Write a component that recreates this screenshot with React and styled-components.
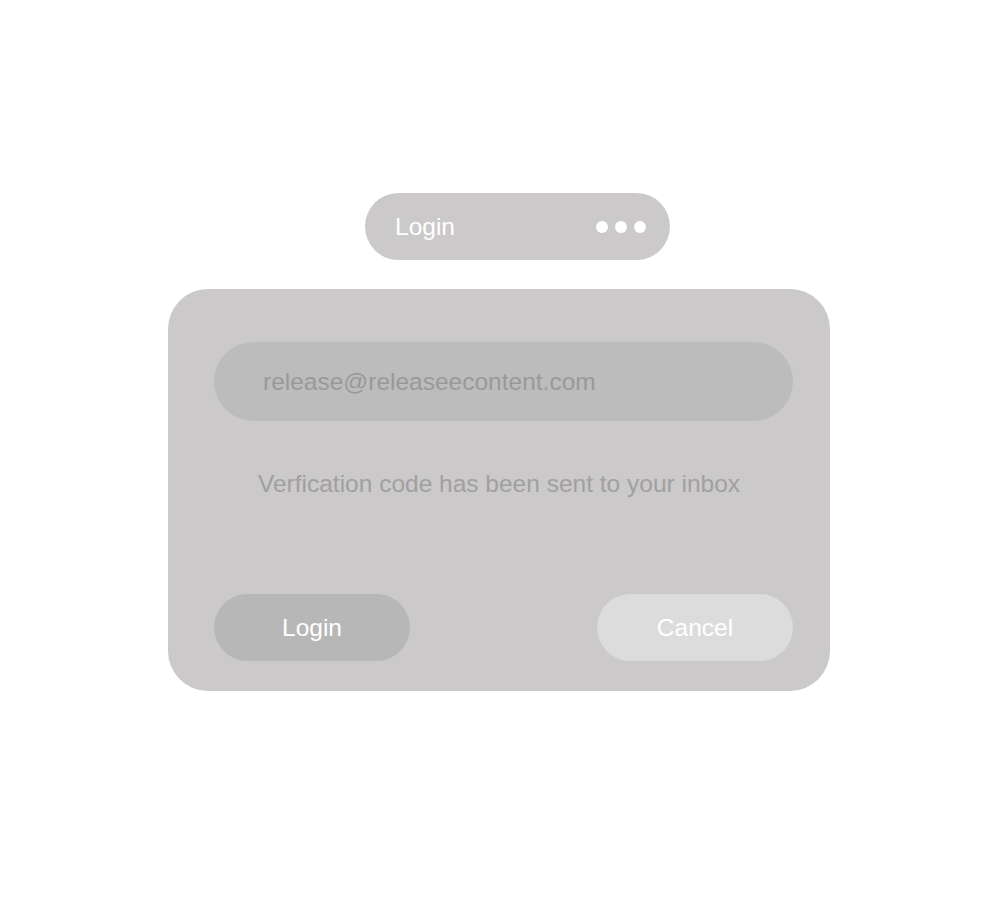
import styled, { createGlobalStyle } from "styled-components";

const GlobalStyle = createGlobalStyle`
  body {
    margin: 0;
    background: #ffffff;
    font-family: "Liberation Sans", Arial, sans-serif;
  }
`;

function App() {
  return (
    <>
      <GlobalStyle />
      <Page>
        <TitleBar>
          <TitleText>Login</TitleText>
          <Dots>
            <Dot />
            <Dot />
            <Dot />
          </Dots>
        </TitleBar>
        <Card>
          <FieldRow>
            <EmailField>release@releaseecontent.com</EmailField>
          </FieldRow>
          <Message>Verfication code has been sent to your inbox</Message>
          <Actions>
            <ActionButton $bg="#b7b7b7">Login</ActionButton>
            <ActionButton $bg="#dcdcdc">Cancel</ActionButton>
          </Actions>
        </Card>
      </Page>
    </>
  );
}

const Page = styled.div`
  display: flex;
  flex-direction: column;
  width: 662px;
  padding: 193px 0 0 168px;
`;

const TitleBar = styled.div`
  display: flex;
  align-items: center;
  justify-content: space-between;
  box-sizing: border-box;
  width: 305px;
  height: 67px;
  margin-left: 197px;
  padding: 0 24px 0 30px;
  border-radius: 34px;
  background: #cbc9ca;
`;

const TitleText = styled.div`
  color: #ffffff;
  font-size: 24.5px;
`;

const Dots = styled.div`
  display: flex;
  gap: 7px;
`;

const Dot = styled.div`
  width: 12px;
  height: 12px;
  border-radius: 50%;
  background: #ffffff;
`;

const Card = styled.div`
  display: flex;
  flex-direction: column;
  margin-top: 29px;
  height: 402px;
  box-sizing: border-box;
  padding: 53px 0 30px;
  border-radius: 40px;
  background: #cbc9ca;
`;

const FieldRow = styled.div`
  margin: 0 37px 0 46px;
`;

const EmailField = styled.div`
  display: flex;
  align-items: center;
  height: 79px;
  padding-left: 49px;
  border-radius: 40px;
  background: #bcbcbc;
  color: #999999;
  font-size: 24.5px;
`;

const Message = styled.div`
  margin-top: 48px;
  text-align: center;
  color: #a0a0a0;
  font-size: 24.5px;
  line-height: 30px;
`;

const Actions = styled.div`
  display: flex;
  justify-content: space-between;
  margin: auto 37px 0 46px;
`;

const ActionButton = styled.div`
  display: flex;
  align-items: center;
  justify-content: center;
  width: 196px;
  height: 67px;
  border-radius: 34px;
  background: ${(p) => p.$bg};
  color: #ffffff;
  font-size: 24.5px;
`;

export default App;
